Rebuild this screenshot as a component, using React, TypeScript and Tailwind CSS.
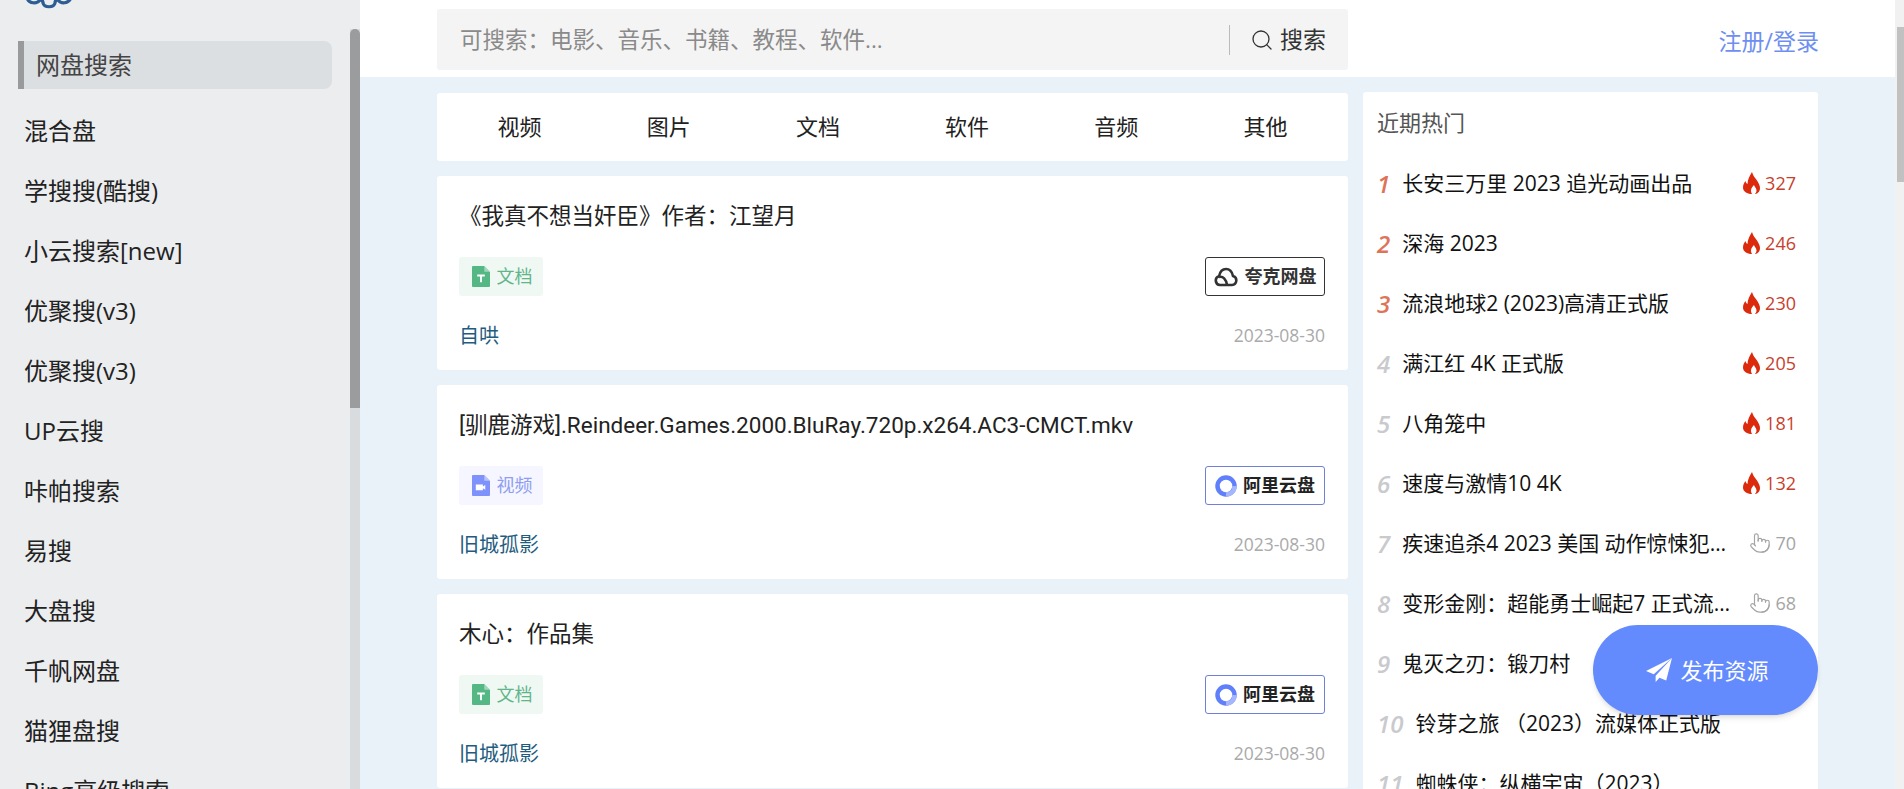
import { Pointer, Search } from "lucide-react";

const menu = [
  "混合盘",
  "学搜搜(酷搜)",
  "小云搜索[new]",
  "优聚搜(v3)",
  "优聚搜(v3)",
  "UP云搜",
  "咔帕搜索",
  "易搜",
  "大盘搜",
  "千帆网盘",
  "猫狸盘搜",
  "Bing高级搜索",
];

const tabs = ["视频", "图片", "文档", "软件", "音频", "其他"];

const resources = [
  { title: "《我真不想当奸臣》作者：江望月", type: "doc", disk: "quark", user: "自哄" },
  { title: "[驯鹿游戏].Reindeer.Games.2000.BluRay.720p.x264.AC3-CMCT.mkv", type: "video", disk: "ali", user: "旧城孤影" },
  { title: "木心：作品集", type: "doc", disk: "ali", user: "旧城孤影" },
];

const hot = [
  { name: "长安三万里 2023 追光动画出品", count: 327 },
  { name: "深海 2023", count: 246 },
  { name: "流浪地球2 (2023)高清正式版", count: 230 },
  { name: "满江红 4K 正式版", count: 205 },
  { name: "八角笼中", count: 181 },
  { name: "速度与激情10 4K", count: 132 },
  { name: "疾速追杀4 2023 美国 动作惊悚犯罪电影", count: 70 },
  { name: "变形金刚：超能勇士崛起7 正式流媒体版", count: 68 },
  { name: "鬼灭之刃：锻刀村", count: 0 },
  { name: "铃芽之旅 （2023）流媒体正式版", count: 0 },
  { name: "蜘蛛侠：纵横宇宙（2023）", count: 0 },
];

function FileIcon({ kind }: { kind: string }) {
  const color = kind === "doc" ? "#55b784" : "#7f92fb";
  return (
    <svg width="18" height="21" viewBox="0 0 19 22" className="shrink-0">
      <path d="M1 0h12l6 6v15a1 1 0 0 1-1 1H1a1 1 0 0 1-1-1V1a1 1 0 0 1 1-1z" fill={color} />
      <path d="M13 0l6 6h-6z" fill="#ffffff" fillOpacity="0.45" />
      {kind === "doc" ? (
        <path d="M5.500 9h8v2h-3v6h-2v-6h-3z" fill="#ffffff" />
      ) : (
        <path d="M4 10h7.500v2l2.500-1.500v5L11.500 14v2H4z" fill="#ffffff" />
      )}
    </svg>
  );
}

function FlameIcon() {
  return (
    <svg width="17" height="22" viewBox="0 0 17 22" className="shrink-0">
      <path
        d="M9 0c1 4 3 5.500 5 8.500c2 3 3 5.500 3 7.500c0 3.500-2.500 6-5 6c1.500-1.500 2-3.500 1-5.500c-.5-1-1.500-2-2-3.500c-1 1-3 3-3 5.500c0 1.500.5 2.500 1 3.500C4 22 0 19.500 0 15.500c0-2.500 1-4.500 2.500-6.500c.3 1.500 1 2.500 2 3C4.500 8 6.500 4 9 0z"
        fill="#dc2a0c"
      />
    </svg>
  );
}

function PlaneIcon() {
  return (
    <svg width="26" height="24" viewBox="0 0 27 25" className="shrink-0" fill="#ffffff">
      <path d="M27 0L0 13.500l8 3.500z" />
      <path d="M27 0L10 18.500V25l4-4.500l7 3z" />
    </svg>
  );
}

function DiskBadge({ disk }: { disk: string }) {
  if (disk === "quark") {
    return (
      <div className="flex h-[39px] w-[120px] items-center justify-center gap-[7px] rounded-[3px] border border-[#333333] text-[18px] font-bold text-[#333333]">
        <svg width="24" height="20" viewBox="0 0 24 20" fill="none" stroke="#333333" strokeWidth="2.600">
          <path d="M6 18a4.500 4.500 0 0 1-1-8.800C6 4.500 9 2 12 2c3.500 0 6 2.500 7 7a4.600 4.600 0 0 1-1 9z" />
          <path d="M5 10c4-1 7 2 8 8" />
        </svg>
        <span>夸克网盘</span>
      </div>
    );
  }
  return (
    <div className="flex h-[39px] w-[120px] items-center justify-center gap-[6px] rounded-[3px] border border-[#6f80d8] text-[18px] font-bold text-[#222222]">
      <svg width="22" height="22" viewBox="0 0 22 22" fill="none">
        <circle cx="11" cy="11" r="8.500" stroke="#5f7ffb" strokeWidth="4.500" />
        <path d="M11 19.500c4.500 0 8.500-3 8.500-8.500" stroke="#a5b6fd" strokeWidth="4.500" />
      </svg>
      <span>阿里云盘</span>
    </div>
  );
}

function ResourceCard({ item }: { item: (typeof resources)[number] }) {
  const isDoc = item.type === "doc";
  return (
    <div className="h-[194px] shrink-0 rounded-[3px] bg-white pl-[22px] pr-[23px] pt-[25px]">
      <div className="h-[30px] font-['Roboto','Noto_Sans_CJK_SC',sans-serif] text-[22.500px] leading-[30px] text-[#222222]">
        {item.title}
      </div>
      <div className="mt-[26px] flex items-center justify-between">
        <div
          className={
            isDoc
              ? "flex h-[39px] w-[84px] items-center justify-center gap-[7px] rounded-[3px] bg-[#f0f8f4] pl-[2px] text-[18px] text-[#62b58a]"
              : "flex h-[39px] w-[84px] items-center justify-center gap-[7px] rounded-[3px] bg-[#f5f6ff] pl-[2px] text-[18px] text-[#8f9ef2]"
          }
        >
          <FileIcon kind={item.type} />
          <span>{isDoc ? "文档" : "视频"}</span>
        </div>
        <DiskBadge disk={item.disk} />
      </div>
      <div className="mt-[23px] flex items-center justify-between leading-[30px]">
        <span className="pt-[2px] text-[20px] text-[#1f5d80]">{item.user}</span>
        <span className="text-[17.500px] text-[#aaaaaa]">2023-08-30</span>
      </div>
    </div>
  );
}

function HotRow({ rank, name, count }: { rank: number; name: string; count: number }) {
  return (
    <div className="flex h-[60px] shrink-0 items-center">
      <span
        className={
          rank <= 3
            ? "text-[24px] font-semibold italic text-[#dd7459]"
            : "text-[24px] font-semibold italic text-[#c9cacd]"
        }
      >
        {rank}
      </span>
      <span className="ml-[12px] max-w-[330px] truncate text-[21px] text-[#111111]">{name}</span>
      {count > 100 && (
        <span className="ml-auto mr-[22px] -mt-[2px] flex items-center gap-[5px] text-[18px] text-[#c8402c]">
          <FlameIcon />
          {count}
        </span>
      )}
      {count > 0 && count <= 100 && (
        <span className="ml-auto mr-[22px] -mt-[2px] flex items-center gap-[4px] text-[18px] text-[#a5a5a5]">
          <Pointer size={22} strokeWidth={1.300} />
          {count}
        </span>
      )}
    </div>
  );
}

export default function App() {
  return (
    <div className="relative flex h-screen overflow-hidden bg-[#e9f1f9] font-['Open_Sans','Noto_Sans_CJK_SC',sans-serif]">
      {/* Sidebar */}
      <aside className="flex h-full w-[360px] shrink-0 bg-[#ecedef]">
        <div className="h-full flex-1 overflow-hidden pl-[18px] pr-[18px]">
          <svg width="48" height="11" viewBox="0 0 48 11" fill="none" className="ml-[7px] block">
            <path
              d="M2 -2c2 6 10 6 13 2c2 0 3 1 3 3c1 5 11 5 12 0c0-2 1-3 3-3c3 4 10 4 13-2"
              stroke="#2d5d92"
              strokeWidth="3.200"
            />
          </svg>
          <div className="mt-[30px] mb-[12px] flex h-[48px] items-center rounded-r-[8px] border-l-[6px] border-[#999a9c] bg-[#dcdfe2] pl-[12px] text-[24px] text-[#444444]">
            网盘搜索
          </div>
          {menu.map((label, i) => (
            <div key={i} className="flex h-[60px] items-center pl-[6px] text-[24px] text-[#222222]">
              {label}
            </div>
          ))}
        </div>
        <div className="mt-[29px] w-[10px] shrink-0 bg-[#d9dcdf]">
          <div className="h-[379px] rounded-t-[5px] bg-[#9b9c9e]" />
        </div>
      </aside>

      {/* Main */}
      <main className="flex min-w-0 flex-1 flex-col">
        <header className="flex h-[77px] shrink-0 items-start bg-white pl-[77px] pr-[76px]">
          <div className="mt-[9px] flex h-[61px] w-[911px] items-center rounded-[3px] bg-[#f4f4f4] pl-[23px] pr-[22px]">
            <span className="flex-1 text-[22.500px] text-[#8a8a8a]">可搜索：电影、音乐、书籍、教程、软件...</span>
            <div className="h-[30px] w-[1px] bg-[#bbbbbb]" />
            <Search size={24} strokeWidth={1.300} className="ml-[20px] text-[#333333]" />
            <span className="ml-[6px] text-[23px] text-[#333333]">搜索</span>
          </div>
          <span className="ml-auto mt-[23px] text-[23px] leading-[36px] text-[#6f8ff0]">注册/登录</span>
        </header>

        <div className="flex min-h-0 flex-1 pl-[77px]">
          <div className="flex w-[911px] shrink-0 flex-col gap-[15px] pt-[16px]">
            <div className="flex h-[68px] shrink-0 items-center rounded-[3px] bg-white px-[8px] pb-[2px]">
              {tabs.map((t) => (
                <div key={t} className="flex-1 text-center text-[22px] text-[#222222]">
                  {t}
                </div>
              ))}
            </div>
            {resources.map((r, i) => (
              <ResourceCard key={i} item={r} />
            ))}
          </div>

          <div className="ml-[15px] mt-[15px] w-[455px] shrink-0 rounded-t-[3px] bg-white pl-[14px]">
            <div className="h-[62px] pt-[14px] text-[22px] leading-[32px] text-[#555555]">近期热门</div>
            <div className="flex flex-col">
              {hot.map((h, i) => (
                <HotRow key={i} rank={i + 1} name={h.name} count={h.count} />
              ))}
            </div>
          </div>
        </div>
      </main>

      {/* Page scrollbar */}
      <div className="flex h-full w-[9px] shrink-0 flex-col bg-[#f1f1f1] pt-[27px]">
        <div className="ml-[2px] h-[155px] bg-[#c1c1c1]" />
      </div>

      {/* Floating publish button */}
      <button className="absolute left-[1593px] top-[625px] flex h-[90px] w-[225px] items-center justify-center gap-[8px] rounded-[45px] bg-[#648bfd] pl-[4px] text-[22px] text-white shadow-md">
        <PlaneIcon />
        发布资源
      </button>
    </div>
  );
}
